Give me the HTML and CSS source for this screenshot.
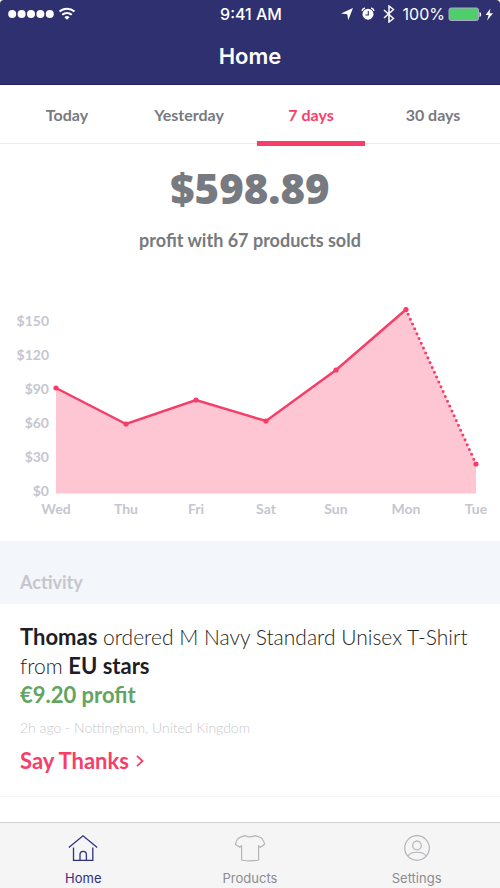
FILE: index.html
```html
<!DOCTYPE html>
<html lang="en">
<head>
<meta charset="utf-8">
<meta name="viewport" content="width=device-width, initial-scale=1">
<title>Home</title>
<link rel="stylesheet" href="styles.css">
</head>
<body>
<header class="header">
  <div class="status">
    <div class="status-left">
      <svg width="68" height="16" viewBox="0 0 68 16" fill="#fff" aria-hidden="true">
        <circle cx="4.2" cy="8" r="4"/><circle cx="13.6" cy="8" r="4"/><circle cx="23" cy="8" r="4"/><circle cx="32.4" cy="8" r="4"/><circle cx="41.8" cy="8" r="4"/>
        <g fill="none" stroke="#fff" stroke-width="2"><path d="M51.5 5.6a11.2 11.2 0 0 1 15 0"/><path d="M54.2 8.8a7.2 7.2 0 0 1 9.6 0"/></g>
        <path d="M56.4 11.2a4 4 0 0 1 5.2 0L59 13.8z"/>
      </svg>
    </div>
    <time class="clock">9:41 AM</time>
    <div class="status-right">
      <svg width="12" height="18" viewBox="0 0 12 18" fill="#fff" aria-hidden="true"><path d="M12 3L7.2 15.3L6.3 9.3L0 8.6z"/></svg>
      <svg width="14" height="18" viewBox="0 0 14 18" aria-hidden="true"><circle cx="7" cy="9.2" r="5.5" fill="#fff"/><path d="M1.200 6A2.800 2.800 0 0 1 4 3.200M10 3.200a2.800 2.800 0 0 1 2.800 2.800" fill="none" stroke="#fff" stroke-width="1.400"/><path d="M7.300 6v4H4.500" fill="none" stroke="#2e3070" stroke-width="1.100"/></svg>
      <svg width="12" height="18" viewBox="0 0 12 18" fill="none" stroke="#fff" stroke-width="1.500" aria-hidden="true"><path d="M1 5l9.500 8.500L6 17V1l4.500 3.500L1 13"/></svg>
      <span class="percent">100%</span>
      <svg width="46" height="18" viewBox="0 0 46 18" aria-hidden="true"><rect x="1" y="3" width="29.500" height="12.500" rx="2" fill="#4fcf6b" stroke="#aaa9cd"/><path d="M31.500 7c2.200.5 2.200 4.500 0 5z" fill="#fff"/><path d="M42.500 3.500L37.600 10h3l-1.500 5.500L45 8.300h-3.400z" fill="#fff"/></svg>
    </div>
  </div>
  <h1 class="title">Home</h1>
</header>

<nav class="tabs" aria-label="Period">
  <button class="tab" type="button">Today</button>
  <button class="tab" type="button">Yesterday</button>
  <button class="tab tab-active" type="button" aria-current="true">7 days</button>
  <button class="tab" type="button">30 days</button>
</nav>

<main class="main">
  <section class="summary">
    <p class="amount">$598.89</p>
    <p class="sold">profit with 67 products sold</p>
  </section>

  <svg class="chart" viewBox="0 0 500 251" role="img" aria-label="Profit per day">
    <path class="area" d="M56 98L126 134L196 110L266 131L336 80L406 19.500L476 174V203.500H56z"/>
    <path class="line" d="M56 98L126 134L196 110L266 131L336 80L406 19.500"/>
    <path class="line line-dotted" d="M406 19.500L476 174"/>
    <g class="points"><circle cx="56" cy="98" r="2.600"/><circle cx="126" cy="134" r="2.600"/><circle cx="196" cy="110" r="2.600"/><circle cx="266" cy="131" r="2.600"/><circle cx="336" cy="80" r="2.600"/><circle cx="406" cy="19.500" r="2.600"/><circle cx="476" cy="174" r="2.600"/></g>
    <g class="label label-y"><text x="49" y="36">$150</text><text x="49" y="70">$120</text><text x="49" y="104">$90</text><text x="49" y="138">$60</text><text x="49" y="172">$30</text><text x="49" y="206">$0</text></g>
    <g class="label label-x"><text x="56" y="224">Wed</text><text x="126" y="224">Thu</text><text x="196" y="224">Fri</text><text x="266" y="224">Sat</text><text x="336" y="224">Sun</text><text x="406" y="224">Mon</text><text x="476" y="224">Tue</text></g>
  </svg>

  <h2 class="section-title">Activity</h2>
  <article class="activity">
    <p class="order"><strong>Thomas</strong> ordered M Navy Standard Unisex T-Shirt from <strong>EU stars</strong></p>
    <p class="profit">€9.20 profit</p>
    <p class="meta">2h ago - Nottingham, United Kingdom</p>
    <a class="thanks" href="#thanks">Say Thanks
      <svg width="8" height="12" viewBox="0 0 8 12" fill="none" stroke="currentColor" stroke-width="1.800" aria-hidden="true"><path d="M1 .8L6.500 6L1 11.200"/></svg>
    </a>
  </article>
</main>

<nav class="tabbar" aria-label="Main">
  <a class="item item-active" href="#home">
    <svg width="32" height="28" viewBox="0 0 32 28" fill="none" stroke="currentColor" stroke-width="1.300" aria-hidden="true"><path d="M1.800 13.500L16 1.800L30.200 13.500M6.500 13.500V26.400H25.800V13.500M13 26.400V20.500a3.200 3.200 0 0 1 6.400 0V26.400"/></svg>
    Home
  </a>
  <a class="item" href="#products">
    <svg width="32" height="28" viewBox="0 0 32 28" fill="none" stroke="currentColor" stroke-width="1.200" stroke-linejoin="round" aria-hidden="true"><path d="M11.500 1.700C14 3 18 3 20.500 1.700C24 2.500 27 3.200 28.300 5C29.500 6.700 30.200 8.500 30.700 10.300L26.300 13.300L24.600 11.600V26C19 27.200 13 27.200 7.600 26V11.600L5.800 13.300L1.300 10.300C1.800 8.500 2.500 6.700 3.700 5C5 3.200 8 2.500 11.500 1.700z"/></svg>
    Products
  </a>
  <a class="item" href="#settings">
    <svg width="32" height="28" viewBox="0 0 32 28" fill="none" stroke="currentColor" stroke-width="1.200" aria-hidden="true"><circle cx="16" cy="14" r="12.300"/><circle cx="16" cy="11.500" r="4.300"/><path d="M6.800 22.200C9.500 16.900 22.500 16.900 25.200 22.200"/></svg>
    Settings
  </a>
</nav>
</body>
</html>
```
FILE: styles.css
```css
* {
  box-sizing: border-box;
}

body {
  margin: 0;
  min-height: 100vh;
  display: flex;
  flex-direction: column;
  background: #fff;
  color: #1d1e26;
  font-family: Lato, "Open Sans", sans-serif;
}

p,
h1,
h2 {
  margin: 0;
}

svg {
  display: block;
  flex: none;
}

.header {
  height: 85px;
  border-radius: 4px 4px 0 0;
  background: #2e3070;
  border-bottom: 1px solid #201f68;
  color: #fff;
  font-family: Inter, Roboto, sans-serif;
}

.status {
  display: grid;
  grid-template-columns: 1fr auto 1fr;
  align-items: center;
  height: 28px;
  padding: 0 6px 0 8px;
}

.clock {
  font-size: 16px;
  font-weight: 500;
}

.status-right {
  display: flex;
  align-items: center;
  justify-content: flex-end;
  gap: 8px;
}

.percent {
  margin-right: -5px;
  font-size: 16px;
}

.title {
  padding-top: 14px;
  font-size: 22px;
  line-height: 28px;
  font-weight: 600;
  text-align: center;
}

.tabs {
  display: grid;
  grid-template-columns: repeat(4, 1fr);
  gap: 14px;
  height: 59px;
  padding: 0 13px;
  border-bottom: 1px solid #ececec;
}

.tab {
  height: 61px;
  padding: 4px 0 0;
  border: 0;
  border-bottom: 5px solid transparent;
  background: none;
  color: #777a80;
  font: 700 16px/24px Lato, sans-serif;
}

.tab-active {
  border-color: #fc3d69;
  color: #fc3d69;
}

.main {
  flex: 1;
}

.summary {
  padding-top: 20px;
  color: #777a80;
  text-align: center;
}

.amount {
  font-family: "Open Sans", Lato, sans-serif;
  font-size: 42px;
  line-height: 48px;
  font-weight: 800;
}

.sold {
  padding: 16px 0 38px;
  font-size: 18px;
  line-height: 24px;
  font-weight: 700;
}

.chart {
  width: 100%;
  height: auto;
}

.area {
  fill: #fec6d3;
}

.line {
  fill: none;
  stroke: #f63c68;
  stroke-width: 2.4px;
}

.line-dotted {
  stroke-width: 3px;
  stroke-linecap: round;
  stroke-dasharray: 0 5.3;
}

.points {
  fill: #f63c68;
}

.label {
  fill: #c5c6d2;
  font-size: 14px;
  font-weight: 700;
}

.label-y {
  text-anchor: end;
}

.label-x {
  text-anchor: middle;
}

.section-title {
  padding: 29px 20px 10px;
  background: #f3f6fa;
  color: #c5c6cd;
  font-size: 18px;
  line-height: 24px;
  font-weight: 700;
}

.activity {
  padding: 18px 20px 20px;
  border-bottom: 1px solid #f5f5f5;
}

.order,
.profit {
  font-size: 21px;
  line-height: 29px;
  font-weight: 300;
}

.order strong {
  font-size: 22px;
  font-weight: 700;
}

.profit {
  color: #61a561;
  font-size: 22px;
  font-weight: 700;
}

.meta {
  padding: 9px 0 8px;
  color: #c9c9cb;
  font-size: 14px;
  line-height: 20px;
  font-weight: 300;
}

.thanks {
  display: inline-flex;
  align-items: center;
  gap: 7px;
  color: #f93d69;
  font-size: 22px;
  line-height: 30px;
  font-weight: 700;
  text-decoration: none;
}

.tabbar {
  position: sticky;
  bottom: 0;
  display: grid;
  grid-template-columns: repeat(3, 1fr);
  height: 66px;
  border-top: 1px solid #cfcfd0;
  background: #f5f5f6;
}

.item {
  display: flex;
  flex-direction: column;
  align-items: center;
  gap: 7px;
  padding-top: 11px;
  color: #8a8c91;
  font: 400 13px/18px Inter, Roboto, sans-serif;
  text-decoration: none;
}

.item svg {
  color: #b2b4b8;
}

.item-active,
.item-active svg {
  color: #2e3080;
}
```
